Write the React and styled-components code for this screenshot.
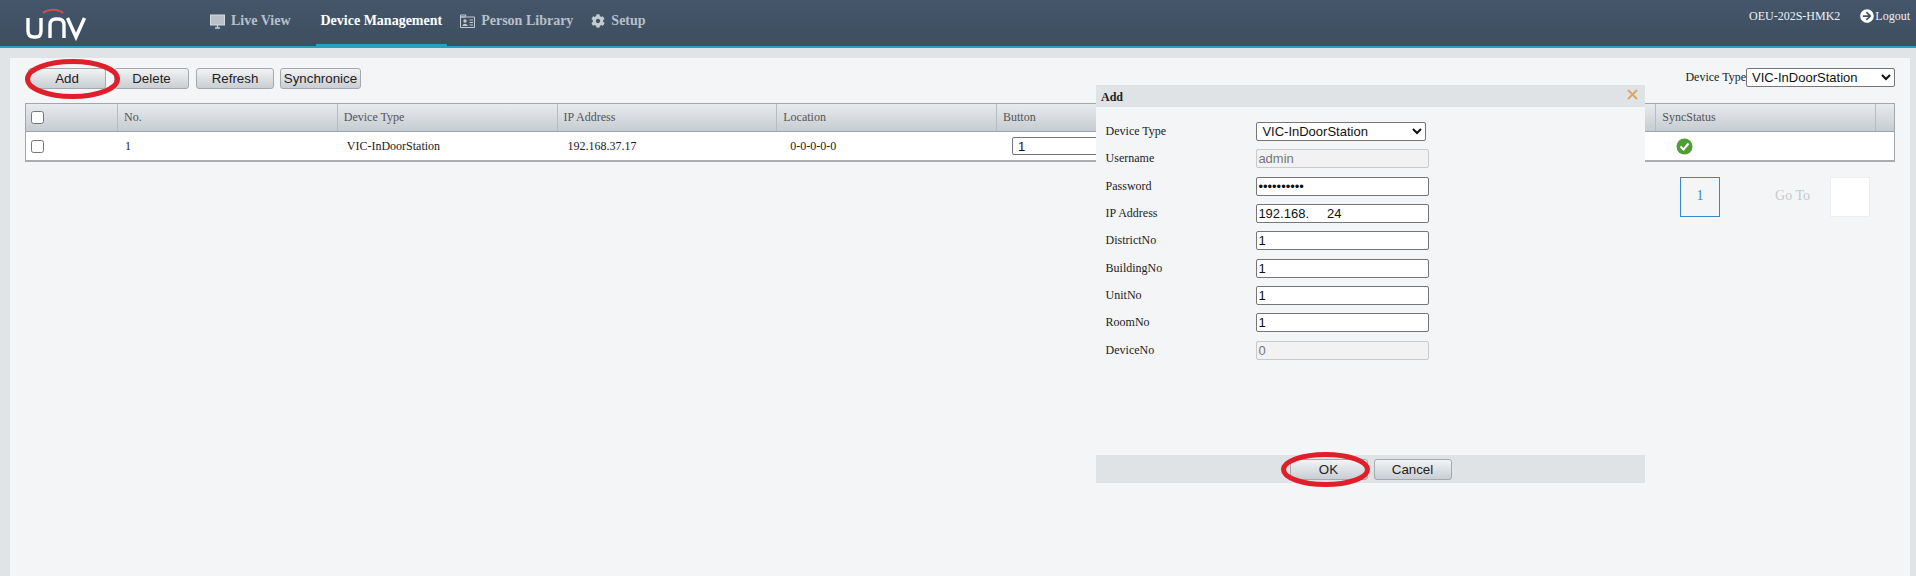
import React from 'react';
import styled, { createGlobalStyle } from 'styled-components';
import { FaCog, FaArrowCircleRight } from 'react-icons/fa';

const Global = createGlobalStyle`
  html, body { margin: 0; padding: 0; background: #e1e4e7; overflow: hidden; }
  body { font-family: "Liberation Serif", serif; font-size: 12px; color: #333; }
  * { box-sizing: border-box; }
`;

const Page = styled.div`width: 1916px; height: 576px; display: flex; flex-direction: column;`;
const Header = styled.header`
  height: 48px; flex: none; display: flex; align-items: stretch;
  background: linear-gradient(#44566b, #3f4e60);
  border-bottom: 2px solid #2a9fc6;
`;
const LogoBox = styled.div`width: 205px; flex: none; padding: 8px 0 0 26px;`;
const Nav = styled.nav`display: flex; align-items: stretch; flex: 1;`;
const NavItem = styled.a`
  display: flex; align-items: center; gap: 6px; padding: 0 5px 2px; margin-left: ${p => p.$gap || 0}px;
  margin-bottom: -2px; font-size: 14px; font-weight: 700; white-space: nowrap;
  color: ${p => (p.$active ? '#fff' : '#b8c0c8')};
  border-bottom: 4px solid ${p => (p.$active ? '#2a9fc6' : 'transparent')};
`;
const UserArea = styled.div`
  display: flex; align-items: flex-start; padding: 9px 6px 0 0; color: #eef1f3; font-size: 12px; white-space: nowrap;
`;
const DeviceName = styled.span`margin-right: 20px; line-height: 14px;`;
const Logout = styled.span`display: flex; align-items: center; gap: 1px; line-height: 14px; svg { font-size: 14px; color: #fff; }`;

const Panel = styled.main`
  position: relative; flex: 1; margin: 10px 6px 0 10px; padding: 10px 15px 0;
  background: #f3f5f7;
`;
const Toolbar = styled.div`display: flex; align-items: flex-start; height: 21px; padding-left: 3px;`;
const ButtonWrap = styled.span`position: relative; display: inline-flex; margin-left: ${p => p.$gap || 0}px;`;
const Btn = styled.button`
  width: ${p => p.$w}px; height: 21px; padding: 0; border: 1px solid #a3a9ae; border-radius: 3px;
  background: linear-gradient(#f2f3f5, #c9ced3);
  font: 13.33px "Liberation Sans", Arial, sans-serif; color: #222;
`;
const Mark = styled.svg`
  position: absolute; pointer-events: none; overflow: visible;
  left: ${p => p.$x}px; top: ${p => p.$y}px; z-index: 5;
`;
const Filter = styled.label`
  margin-left: auto; display: flex; align-items: center; font-size: 12px; color: #222; height: 19px;
`;
const NativeSelect = styled.select`
  width: ${p => p.$w}px; height: 19px; margin: 0; padding: 0 0 0 1px; background: #fff;
  border: 1px solid #767676; border-radius: 2px; font: 13px "Liberation Sans", Arial, sans-serif; color: #111;
`;

const Table = styled.div`margin-top: 14px; width: 1870px; border: 1px solid #a2a6aa; border-bottom: 2px solid #a9adb1; border-left-width: 1px;`;
const Row = styled.div`
  display: grid; grid-template-columns: 92px repeat(8, 219.75px) 1fr; height: ${p => p.$h}px; align-items: center;
  background: ${p => p.$head ? 'linear-gradient(#e8eaed, #c6ccd1)' : '#fff'};
  border-bottom: ${p => p.$head ? '1px solid #9fa4a8' : '0'};
`;
const HeadCell = styled.div`
  height: 100%; display: flex; align-items: center; padding-left: 6px; font-size: 12px; color: #555;
  border-right: 1px solid #b7bcc1;
`;
const HeadEnd = styled.div`height: 100%;`;
const Cell = styled.div`display: flex; align-items: center; padding-left: ${p => p.$pad ?? 9}px; font-size: 12px; color: #222; white-space: nowrap;`;
const Box = styled.input.attrs({ type: 'checkbox' })`width: 13px; height: 13px; margin: 0 0 0 -1px;`;
const CellInput = styled.input`
  width: 172px; height: 18px; margin-left: 6px; padding: 0 5px; background: #fff; border: 1px solid #767676; border-radius: 2px;
  font: 13px "Liberation Sans", Arial, sans-serif; color: #111;
`;
const StatusIcon = styled.svg`display: block; margin-left: 20px;`;

const Pager = styled.div`display: flex; align-items: center; justify-content: flex-end; margin-top: 15px; padding-right: 25px;`;
const PageNo = styled.div`
  width: 40px; height: 40px; display: flex; align-items: center; justify-content: center; padding-bottom: 3px;
  border: 1px solid #3a87c8; color: #3a87c8; font-size: 14px;
`;
const GoTo = styled.span`margin: 0 20px 3px 55px; font-size: 14px; color: #c6c9cd;`;
const GoInput = styled.div`width: 40px; height: 40px; background: #fff; border: 1px solid #eceef0;`;

const Dialog = styled.section`
  position: absolute; left: 1086px; top: 27px; width: 549px; height: 398px; z-index: 3;
  background: #f3f5f7; display: flex; flex-direction: column;
`;
const DialogHead = styled.div`
  height: 22px; flex: none; display: flex; align-items: center; justify-content: space-between;
  padding: 3px 3px 0 5px; background: #e0e3e6; font-size: 12px; font-weight: 700; color: #222;
`;
const CloseX = styled.svg`display: block; margin-top: -6px; margin-right: 4px;`;
const DialogBody = styled.div`flex: 1; padding: 15px 0 0 9.6px;`;
const FormRow = styled.div`display: grid; grid-template-columns: 150.8px 1fr; height: 27.33px; align-items: start;`;
const FormLabel = styled.label`font-size: 12px; line-height: 19px; color: #222;`;
const FormInput = styled.input`
  width: 173px; height: 19px; margin: 0; padding: 0 1px; background: ${p => (p.disabled ? '#f2f2f2' : '#fff')};
  border: 1px solid ${p => (p.disabled ? '#c9c9c9' : '#767676')}; border-radius: 2px;
  font: 13px "Liberation Sans", Arial, sans-serif; color: ${p => (p.disabled ? '#777' : '#111')};
`;
const DialogFoot = styled.div`
  height: 28px; flex: none; display: flex; align-items: center; justify-content: center; gap: 6px; background: #e0e3e6;
`;

const Logo = () => (
  <svg width="62" height="34" viewBox="0 0 62 34" fill="none" aria-label="UNV logo">
    <path d="M17 5 C22 0.5 32 0.5 37 5" stroke="#d4504e" strokeWidth="2" />
    <path d="M2 10 V23 Q2 29 8 29 H10 Q15 29 15 23 V10" stroke="#fff" strokeWidth="3.4" />
    <path d="M24 30 V17 Q24 11 30 11 H32 Q38 11 38 17 V30" stroke="#fff" strokeWidth="3.4" />
    <path d="M41.5 10 L50 29 L58.5 10" stroke="#fff" strokeWidth="3.4" />
  </svg>
);
const Monitor = () => (
  <svg width="15" height="15" viewBox="0 0 15 15" fill="none">
    <rect x="0.5" y="1" width="14" height="10" fill="#b8c0c8" stroke="#d5dade" />
    <path d="M5 14 H10 M7.5 11 V14" stroke="#c8ced3" strokeWidth="1.3" />
  </svg>
);
const PersonCard = () => (
  <svg width="15" height="14" viewBox="0 0 15 14" fill="none">
    <path d="M0.5 3 H5 L6 1 H0.5 Z M0.5 3 H14.5 V13.5 H0.5 Z" stroke="#c4cbd1" />
    <circle cx="5" cy="7" r="1.7" fill="#c4cbd1" />
    <path d="M2 12 Q5 7.5 8 12 Z" fill="#c4cbd1" />
    <path d="M9.5 6 H13 M9.5 8.5 H13 M9.5 11 H13" stroke="#c4cbd1" />
  </svg>
);
const Ellipse = ({ x, y, w, h }) => (
  <Mark $x={x} $y={y} width={w} height={h} viewBox={`0 0 ${w} ${h}`} fill="none">
    <ellipse cx={w / 2} cy={h / 2} rx={w / 2 - 2.5} ry={h / 2 - 2.5} stroke="#e01f2b" strokeWidth="5" />
  </Mark>
);

const heads = ['No.', 'Device Type', 'IP Address', 'Location', 'Button', '', '', 'SyncStatus'];
const fields = [
  ['Username', 'admin', true],
  ['Password', '••••••••••', false],
  ['IP Address', '192.168.     24', false],
  ['DistrictNo', '1', false],
  ['BuildingNo', '1', false],
  ['UnitNo', '1', false],
  ['RoomNo', '1', false],
  ['DeviceNo', '0', true],
];

export default function App() {
  return (
    <Page>
      <Global />
      <Header>
        <LogoBox><Logo /></LogoBox>
        <Nav>
          <NavItem><Monitor />Live View</NavItem>
          <NavItem $gap={20} $active>Device Management</NavItem>
          <NavItem $gap={8}><PersonCard />Person Library</NavItem>
          <NavItem $gap={8}><FaCog size={14} color="#c4cbd1" />Setup</NavItem>
        </Nav>
        <UserArea>
          <DeviceName>OEU-202S-HMK2</DeviceName>
          <Logout><FaArrowCircleRight />Logout</Logout>
        </UserArea>
      </Header>
      <Panel>
        <Toolbar>
          <ButtonWrap>
            <Btn $w={78}>Add</Btn>
            <Ellipse x={-3} y={-9} w={95} h={40} />
          </ButtonWrap>
          <ButtonWrap $gap={8}><Btn $w={75}>Delete</Btn></ButtonWrap>
          <ButtonWrap $gap={7}><Btn $w={78}>Refresh</Btn></ButtonWrap>
          <ButtonWrap $gap={6}><Btn $w={81}>Synchronice</Btn></ButtonWrap>
          <Filter>
            Device Type
            <NativeSelect $w={149} defaultValue="VIC-InDoorStation">
              <option>VIC-InDoorStation</option>
            </NativeSelect>
          </Filter>
        </Toolbar>
        <Table>
          <Row $head $h={28}>
            <HeadCell><Box /></HeadCell>
            {heads.map((h, i) => <HeadCell key={i}>{h}</HeadCell>)}
            <HeadEnd />
          </Row>
          <Row $h={28}>
            <Cell $pad={6}><Box /></Cell>
            <Cell $pad={7}>1</Cell>
            <Cell>VIC-InDoorStation</Cell>
            <Cell $pad={10}>192.168.37.17</Cell>
            <Cell $pad={13}>0-0-0-0-0</Cell>
            <Cell $pad={9}><CellInput defaultValue="1" /></Cell>
            <Cell />
            <Cell />
            <Cell $pad={0}>
              <StatusIcon width="17" height="17" viewBox="0 0 17 17">
                <circle cx="8.5" cy="8.5" r="8" fill="#4f9e33" />
                <path d="M4.5 8.5 L7.5 11.5 L12.5 5.5" fill="none" stroke="#fff" strokeWidth="2" />
              </StatusIcon>
            </Cell>
          </Row>
        </Table>
        <Pager>
          <PageNo>1</PageNo>
          <GoTo>Go To</GoTo>
          <GoInput />
        </Pager>
        <Dialog>
          <DialogHead>
            Add
            <CloseX width="11" height="11" viewBox="0 0 11 11">
              <path d="M1 1 L10 10 M10 1 L1 10" stroke="#d9a663" strokeWidth="1.8" />
            </CloseX>
          </DialogHead>
          <DialogBody>
            <FormRow>
              <FormLabel>Device Type</FormLabel>
              <NativeSelect $w={170} defaultValue="VIC-InDoorStation">
                <option>VIC-InDoorStation</option>
              </NativeSelect>
            </FormRow>
            {fields.map(([label, value, disabled]) => (
              <FormRow key={label}>
                <FormLabel>{label}</FormLabel>
                <FormInput defaultValue={value} disabled={disabled} />
              </FormRow>
            ))}
          </DialogBody>
          <DialogFoot>
            <ButtonWrap>
              <Btn $w={78}>OK</Btn>
              <Ellipse x={-9} y={-7} w={89} h={35} />
            </ButtonWrap>
            <ButtonWrap><Btn $w={78}>Cancel</Btn></ButtonWrap>
          </DialogFoot>
        </Dialog>
      </Panel>
    </Page>
  );
}
